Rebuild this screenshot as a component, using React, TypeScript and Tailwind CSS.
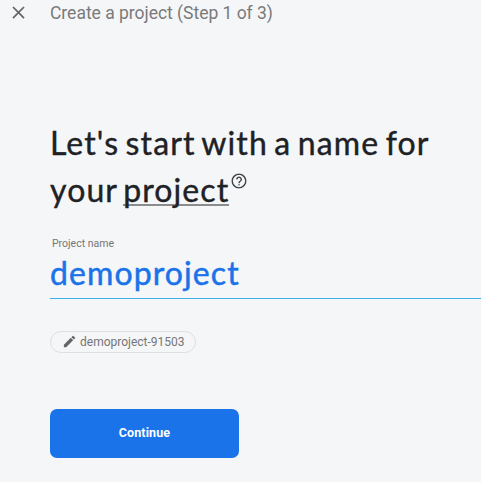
import { MdClose, MdEdit, MdHelpOutline } from "react-icons/md";

export default function App() {
  return (
    <main className="flex h-[482px] w-full flex-col overflow-hidden bg-[#f5f6f8] font-['Roboto',sans-serif]">
      <header className="flex h-6 items-center text-[#7a7a7a]">
        <MdClose className="ml-2 size-[21px] shrink-0 text-[#666]" />
        <h2 className="ml-[21px] pt-px text-[17.5px] leading-6 whitespace-nowrap tracking-[-0.02px]">
          Create a project (Step 1 of 3)
        </h2>
      </header>
      <section className="mt-[95px] ml-[50px] flex flex-col">
        <h1 className="font-['Lato',sans-serif] text-[32px] leading-[47px] tracking-[1.1px] whitespace-nowrap text-[#202124] [-webkit-text-stroke:0.4px_#202124]">
          <span className="block [word-spacing:-2.8px]">Let's start with a name for</span>
          <span className="flex">
            <span className="whitespace-pre [word-spacing:-3.5px]">your </span>
            <span className="mt-2 h-[32px] border-b-2 border-[#8c8c8f] leading-[32px]">project</span>
            <MdHelpOutline className="mt-[6px] ml-px size-[18px] stroke-[#f5f6f8] stroke-[0.5]" />
          </span>
        </h1>
        <label className="mt-[23px] flex flex-col border-b border-[#3db0ea] whitespace-nowrap">
          <span className="ml-[2px] text-[10.5px] leading-4 text-[#757575]">Project name</span>
          <span className="h-[46px] font-['Lato',sans-serif] text-[32px] leading-[41px] tracking-[1.1px] text-[#1a73e8] [-webkit-text-stroke:0.5px_#1a73e8]">
            demoproject
          </span>
        </label>
        <button className="mt-8 flex h-[22px] w-[146px] items-center rounded-full border border-[#dddfe2] pl-[11px] text-[12px] whitespace-nowrap text-[#757575]">
          <MdEdit className="mr-[3px] mb-px size-[15px] text-[#666]" />
          <span className="pb-px">demoproject-91503</span>
        </button>
        <button className="mt-14 h-[49px] w-[189px] rounded-[7px] bg-[#1a73e8] text-[12.5px] font-bold tracking-[0.1px] text-white">
          Continue
        </button>
      </section>
    </main>
  );
}
